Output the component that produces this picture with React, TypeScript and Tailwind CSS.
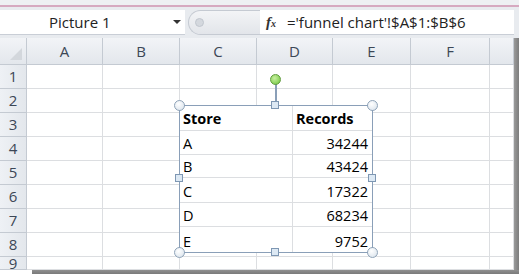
import React from "react";

const cols = ["", "A", "B", "C", "D", "E", "F", ""];
const rows = ["1", "2", "3", "4", "5", "6", "7", "8", "9"];
const data: [string, string][] = [
  ["A", "34244"],
  ["B", "43424"],
  ["C", "17322"],
  ["D", "68234"],
  ["E", "9752"],
];

function Circle({ x, y, green }: { x: number; y: number; green?: boolean }) {
  return (
    <div
      className={
        green
          ? "absolute w-[11px] h-[11px] rounded-full border border-[#5f9c3c] bg-[radial-gradient(circle_at_40%_35%,#c8f0a0,#6cc43a)]"
          : "absolute w-[11px] h-[11px] rounded-full border border-[#8fa3b8] bg-[radial-gradient(circle_at_40%_35%,#ffffff,#d6e0ea)]"
      }
      style={{ left: x - 5.5, top: y - 5.5 }}
    />
  );
}

function Square({ x, y }: { x: number; y: number }) {
  return (
    <div
      className="absolute w-[8px] h-[8px] border border-[#7e97b3] bg-[#dde9f4]"
      style={{ left: x - 4, top: y - 4 }}
    />
  );
}

export default function App() {
  return (
    <div
      className="relative w-[519px] h-[277px] bg-white overflow-hidden"
      style={{ fontFamily: '"Open Sans", "Noto Sans", sans-serif' }}
    >
      {/* top strip */}
      <div className="h-[5px] bg-[#eef0f3]" />
      <div className="h-[2px] bg-[#d6a9c0]" />
      {/* formula bar */}
      <div className="h-[31px] bg-[#e8ebef] flex items-center pr-[5px]">
        <div className="w-[185px] h-[25px] bg-white border-b border-[#c9ced6] flex items-center pl-[49px] pr-[4px]">
          <span className="text-[15px] text-[#222]">Picture 1</span>
          <div className="ml-auto w-0 h-0 border-l-[4px] border-r-[4px] border-t-[4px] border-l-transparent border-r-transparent border-t-[#333]" />
        </div>
        <div className="ml-[3px] w-[72px] h-[25px] rounded-l-full border border-r-0 border-[#c5cad2] bg-gradient-to-b from-[#f3f4f6] to-[#e2e5ea] flex items-center pl-[6px]">
          <div className="w-[9px] h-[9px] rounded-full bg-[#d4d8de] border border-[#c1c6ce]" />
        </div>
        <div className="flex-1 h-[25px] bg-white border-b border-[#c9ced6] flex items-center pl-[6px] gap-[1px]">
          <span
            className="w-[20px] text-[15px] italic font-bold text-[#333]"
            style={{ fontFamily: '"Liberation Serif", serif' }}
          >
            f<span className="text-[10px]">x</span>
          </span>
          <span className="text-[15px] text-[#222]">='funnel chart'!$A$1:$B$6</span>
        </div>
      </div>
      {/* sheet */}
      <div className="flex">
        <div className="grid grid-cols-[27px_76px_77px_77px_76px_78px_79px_24px] grid-rows-[27px_24px_24px_24px_24px_24px_24px_24px_24px_13px] w-[514px]">
          {cols.map((c, i) => (
            <div
              key={"h" + i}
              className="bg-gradient-to-b from-[#f2f4f7] to-[#e3e7ec] border-r border-b border-[#c4cad2] flex items-center justify-center text-[15px] text-[#3c4756]"
            >
              {i === 0 ? (
                <div className="self-end ml-auto mr-[4px] mb-[4px] w-0 h-0 border-b-[12px] border-l-[12px] border-b-[#d3d7dc] border-l-transparent" />
              ) : (
                c
              )}
            </div>
          ))}
          {rows.map((r) =>
            cols.map((_, i) =>
              i === 0 ? (
                <div
                  key={r + i}
                  className="bg-gradient-to-r from-[#eef1f5] to-[#e3e7ec] border-r border-b border-[#c4cad2] flex items-center justify-center text-[15px] text-[#3c4756] overflow-hidden"
                >
                  {r}
                </div>
              ) : (
                <div key={r + i} className="border-r border-b border-[#dcdee1]" />
              )
            )
          )}
        </div>
        <div className="w-[5px] bg-gradient-to-r from-[#9a9a9a] to-[#7d7d7d]" />
      </div>
      {/* bottom scroll edge */}
      <div className="absolute left-0 top-[270px] w-[519px] h-[7px] bg-white flex flex-col">
        <div className="ml-[32px] h-[4px] bg-gradient-to-b from-[#8f8f8f] to-[#7a7a7a]" />
      </div>

      {/* picture */}
      <div className="absolute left-[179px] top-[105px] w-[194px] h-[148px] bg-white border-[1.5px] border-[#8a9fb8]">
        <div className="grid grid-cols-[113px_1fr] grid-rows-[25px_24px_23px_25px_24px_1fr] h-full text-[14.5px] text-black">
          <div className="border-r border-b border-[#dcdee1] pl-[3px] font-bold flex items-end leading-[22px]">Store</div>
          <div className="border-b border-[#dcdee1] pl-[3px] font-bold flex items-end leading-[22px]">Records</div>
          {data.map(([s, v], i) => (
            <React.Fragment key={s}>
              <div className={"border-r border-[#dcdee1] pl-[3px] flex items-end leading-[21px] " + (i < 4 ? "border-b" : "")}>{s}</div>
              <div className={"border-[#dcdee1] pr-[4px] flex items-end justify-end leading-[21px] " + (i < 4 ? "border-b" : "")}>{v}</div>
            </React.Fragment>
          ))}
        </div>
      </div>
      {/* handles */}
      <div className="absolute left-[275px] top-[84px] w-[1.5px] h-[21px] bg-[#8a9fb8]" />
      <Circle x={275} y={79} green />
      <Circle x={179} y={105} />
      <Circle x={372} y={105} />
      <Circle x={179} y={252} />
      <Circle x={372} y={252} />
      <Square x={275} y={105} />
      <Square x={275} y={252} />
      <Square x={179} y={178} />
      <Square x={372} y={178} />
    </div>
  );
}
